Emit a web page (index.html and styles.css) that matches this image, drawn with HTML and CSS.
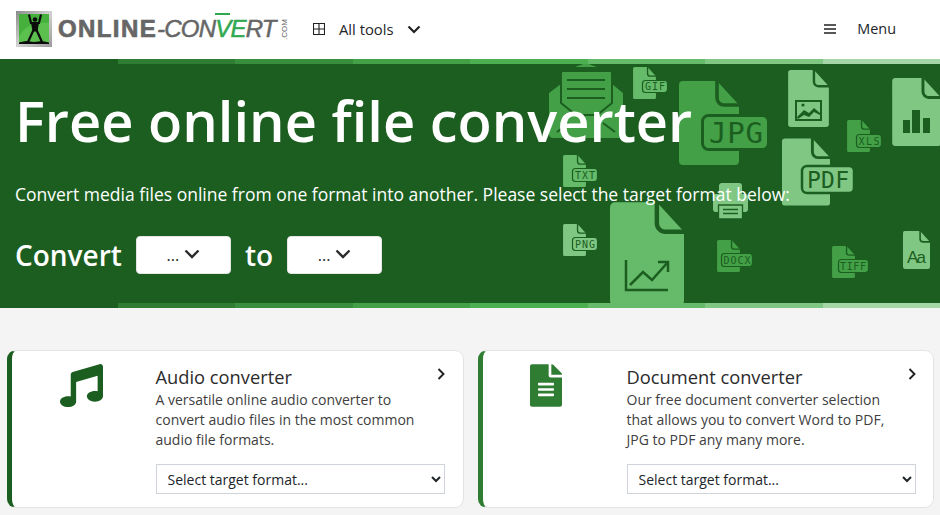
FILE: index.html
```html
<!DOCTYPE html>
<html lang="en">
<head>
<meta charset="utf-8">
<title>Online-Convert</title>
<link rel="stylesheet" href="styles.css">
</head>
<body>
<svg class="defs" width="0" height="0" aria-hidden="true">
  <defs>
    <symbol id="doc" viewBox="0 0 60 84">
      <path fill="currentColor" d="M4 0H38L60 24V80a4 4 0 0 1-4 4H4a4 4 0 0 1-4-4V4a4 4 0 0 1 4-4z"/>
      <path fill="none" stroke="#1b5e20" stroke-width="3.6" d="M38-2V17a7 7 0 0 0 7 7H62"/>
    </symbol>
  </defs>
</svg>
<header class="topbar">
  <a class="logo" href="#">
    <svg class="logo-mark" viewBox="0 0 36 36">
      <defs>
        <linearGradient id="frame" x1="0" y1="0" x2="1" y2="1"><stop offset="0" stop-color="#8a8a8a"/><stop offset=".5" stop-color="#d2d2d2"/><stop offset="1" stop-color="#9a9a9a"/></linearGradient>
      </defs>
      <rect width="36" height="36" fill="url(#frame)"/>
      <rect x="3" y="3" width="30" height="30" fill="#45b03c"/>
      <path d="M3 26C8 15 20 10 33 12V33H3z" fill="#5cc04f"/>
      <path fill="none" stroke="#0c0c0c" stroke-width="2.200" d="M13 3.500 15 12H23L25 3.500M17.500 19 12 31M20.500 19 26 31"/>
      <path fill="#0c0c0c" d="M15 11.500h8l-1.500 9h-5z"/>
      <circle cx="19" cy="8.500" r="2.300" fill="#0c0c0c"/>
      <path fill="#0c0c0c" d="M3 33V31.500L10 30l8 1 8-1 7 1.500V33z"/>
    </svg>
    <span class="wordmark"><span class="wm-bold">ONLINE</span><span class="wm-it">-CON<span class="wm-v">V</span><span class="wm-g">E</span>RT</span></span>
    <span class="wm-com">.COM</span>
  </a>
  <button class="nav-btn tools" type="button">
    <svg class="ico-grid" viewBox="0 0 12 12"><path fill="none" stroke="#222" stroke-width="1.100" d="M.5.5h11v11H.5zM6 .5v11M.5 6h11"/></svg>
    <span>All tools</span>
    <svg class="ico-chev" viewBox="0 0 14 9"><path fill="none" stroke="#222" stroke-width="2.200" d="M1.500 1.500 7 7l5.500-5.500"/></svg>
  </button>
  <button class="nav-btn menu" type="button">
    <svg class="ico-burger" viewBox="0 0 12 10"><path fill="none" stroke="#222" stroke-width="1.600" d="M0 1h12M0 5h12M0 9h12"/></svg>
    <span>Menu</span>
  </button>
</header>

<section class="hero">
  <div class="strip strip-dark"><i></i><i></i><i></i><i></i><i></i><i></i><i></i><i></i></div>
  <svg class="hero-art" viewBox="0 0 940 249" aria-hidden="true">
    <g class="c43">
      <path fill="currentColor" d="M575 8 586 4 597 8z"/>
      <path fill="currentColor" d="M549 34 561 25H612L623 34V75a4 4 0 0 1-4 4H553a4 4 0 0 1-4-4z"/>
      <path fill="currentColor" stroke="#1b5e20" stroke-width="2" d="M563 12H610a2 2 0 0 1 2 2V44L597 56H576L561 44V14a2 2 0 0 1 2-2z"/>
      <path stroke="#1b5e20" stroke-width="2" d="M567 21h38M567 30h38M567 39h38M557 73l12-9M615 73 603 64"/>
      <use href="#doc" x="679" y="22" width="60" height="84"/>
      <use href="#doc" x="847" y="61" width="23" height="32"/>
      <use href="#doc" x="717" y="181" width="23" height="32"/>
      <use href="#doc" x="832" y="187" width="23" height="32"/>
    </g>
    <g class="c66">
      <use href="#doc" x="633" y="8" width="23" height="32"/>
      <use href="#doc" x="563" y="96" width="23" height="32"/>
      <use href="#doc" x="610" y="143" width="74" height="104"/>
    </g>
    <g class="c81">
      <use href="#doc" x="788" y="11" width="41" height="57"/>
      <use href="#doc" x="892" y="19" width="49" height="68"/>
      <use href="#doc" x="782" y="79" width="48" height="68"/>
      <use href="#doc" x="563" y="165" width="23" height="32"/>
      <use href="#doc" x="903" y="172" width="27" height="38"/>
      <path fill="currentColor" d="M722 124h17a3 3 0 0 1 3 3v8h3a3 3 0 0 1 3 3v12a3 3 0 0 1-3 3h-3v6h-23v-6h-3a3 3 0 0 1-3-3v-12a3 3 0 0 1 3-3h3v-8a3 3 0 0 1 3-3z"/>
      <path stroke="#1b5e20" stroke-width="1.300" fill="currentColor" d="M718.500 146h24v14h-24z"/>
      <path stroke="#1b5e20" stroke-width="1.300" fill="none" d="M723 150.500h15M723 154.500h15"/>
    </g>
    <g class="art-lines" fill="none" stroke="#1b5e20">
      <path stroke-width="2" d="M796 42h25v19h-25z"/>
      <path fill="#1b5e20" stroke="none" d="M797 58l7-7 5 3 5-5 6 5v2l-6-3-5 5-5-2-6 4z"/>
      <circle cx="803" cy="46" r="1.600" fill="#1b5e20" stroke="none"/>
      <path fill="#1b5e20" stroke="none" d="M903 61h7v13h-7zM912 51h8v23h-8zM923 59h7v15h-7z"/>
      <path stroke-width="2.500" d="M626 201v31M625 231h43M630 226l13-13 9 8 16-18M658 203h10v10"/>
    </g>
    <g class="labels">
      <g class="c66"><rect x="642.500" y="21.500" width="25" height="12" rx="3"/><text x="655" y="31" textLength="20">GIF</text></g>
      <g class="c66"><rect x="572.500" y="109.500" width="25" height="13" rx="3"/><text x="585" y="120" textLength="20">TXT</text></g>
      <g class="c81"><rect x="572.500" y="178.500" width="25" height="13" rx="3"/><text x="585" y="189" textLength="20">PNG</text></g>
      <g class="c43"><rect x="856.500" y="75.500" width="25" height="13" rx="3"/><text x="869" y="86" textLength="21">XLS</text></g>
      <g class="c43"><rect x="721.500" y="194.500" width="31" height="13" rx="3"/><text x="737" y="205" textLength="27">DOCX</text></g>
      <g class="c43"><rect x="838.500" y="200.500" width="30" height="13" rx="3"/><text x="853" y="211" textLength="26">TIFF</text></g>
      <g class="c43 big"><rect x="702.500" y="56.500" width="66" height="34" rx="6"/><text x="736" y="84" textLength="54">JPG</text></g>
      <g class="c81 mid"><rect x="802" y="107" width="52" height="27" rx="5"/><text x="828" y="129" textLength="42">PDF</text></g>
      <g class="c81"><text class="aa" x="916.500" y="204" textLength="19">Aa</text></g>
    </g>
  </svg>
  <div class="hero-body">
    <h1 class="hero-title">Free online file converter</h1>
    <p class="hero-sub">Convert media files online from one format into another. Please select the target format below:</p>
    <div class="convert-row">
      <span class="convert-word">Convert</span>
      <button class="fmt-btn" type="button"><span>...</span><svg viewBox="0 0 16 10"><path fill="none" stroke="#2b2b2b" stroke-width="2.400" d="M1.500 1.500 8 8l6.500-6.500"/></svg></button>
      <span class="convert-word">to</span>
      <button class="fmt-btn" type="button"><span>...</span><svg viewBox="0 0 16 10"><path fill="none" stroke="#2b2b2b" stroke-width="2.400" d="M1.500 1.500 8 8l6.500-6.500"/></svg></button>
    </div>
  </div>
  <div class="strip strip-light"><i></i><i></i><i></i><i></i><i></i><i></i><i></i><i></i></div>
</section>

<main class="cards">
  <article class="card card-audio">
    <div class="card-icon">
      <svg class="ico-music" viewBox="0 0 512 512"><path fill="#1b5e20" d="M511.990 32.010c0-21.710-21.100-37.010-41.600-30.510L150.400 96c-13.300 4.200-22.400 16.500-22.400 30.500v261.420c-10.050-2.380-20.720-3.920-32-3.920-53.020 0-96 28.650-96 64s42.980 64 96 64 96-28.650 96-64V214.310l256-75.020v184.630c-10.050-2.380-20.720-3.920-32-3.920-53.020 0-96 28.650-96 64s42.980 64 96 64 96-28.650 96-64l-.01-351.990z"/></svg>
    </div>
    <div class="card-body">
      <svg class="ico-next" viewBox="0 0 8 12"><path fill="none" stroke="#222" stroke-width="1.900" d="M1.500 1 6.500 6l-5 5"/></svg>
      <h2 class="card-title">Audio converter</h2>
      <p class="card-text">A versatile online audio converter to convert audio files in the most common audio file formats.</p>
      <select class="card-select"><option>Select target format...</option></select>
    </div>
  </article>
  <article class="card card-doc">
    <div class="card-icon">
      <svg class="ico-file" viewBox="0 0 384 512"><path fill="#2e7d32" d="M224 136V0H24C10.700 0 0 10.700 0 24v464c0 13.300 10.700 24 24 24h336c13.300 0 24-10.700 24-24V160H248c-13.200 0-24-10.800-24-24zm64 236c0 6.600-5.400 12-12 12H108c-6.600 0-12-5.400-12-12v-8c0-6.600 5.400-12 12-12h168c6.600 0 12 5.400 12 12v8zm0-64c0 6.600-5.400 12-12 12H108c-6.600 0-12-5.400-12-12v-8c0-6.600 5.400-12 12-12h168c6.600 0 12 5.400 12 12v8zm0-72v8c0 6.600-5.400 12-12 12H108c-6.600 0-12-5.400-12-12v-8c0-6.600 5.400-12 12-12h168c6.600 0 12 5.400 12 12zm96-114.100v6.100H256V0h6.100c6.400 0 12.500 2.500 17 7l97.900 98c4.500 4.500 7 10.600 7 16.900z"/></svg>
    </div>
    <div class="card-body">
      <svg class="ico-next" viewBox="0 0 8 12"><path fill="none" stroke="#222" stroke-width="1.900" d="M1.500 1 6.500 6l-5 5"/></svg>
      <h2 class="card-title">Document converter</h2>
      <p class="card-text">Our free document converter selection that allows you to convert Word to PDF, JPG to PDF any many more.</p>
      <select class="card-select"><option>Select target format...</option></select>
    </div>
  </article>
</main>
</body>
</html>
```

FILE: styles.css
```css
* { box-sizing: border-box; }
html, body { margin: 0; padding: 0; }
body { background: #f4f4f4; color: #212529; font-family: "Open Sans", "Liberation Sans", sans-serif; overflow: hidden; }
.defs { position: absolute; }

.topbar { height: 59px; background: #fff; display: flex; align-items: center; padding: 0 0 1px 16px; }
.logo { display: flex; align-items: center; text-decoration: none; width: 297px; flex: none; height: 36px; }
.logo-mark { width: 36px; height: 36px; flex: none; display: block; }
.wordmark { margin-left: 6px; font-family: "Liberation Sans", sans-serif; font-size: 24px; line-height: 1; color: #666; white-space: nowrap; }
.wm-bold { font-weight: 700; letter-spacing: 1.400px; -webkit-text-stroke: .7px #666; }
.wm-it { font-style: italic; letter-spacing: -.8px; -webkit-text-stroke: .5px #666; }
.wm-v { color: #2fa84f; border-top: 2px solid #2fa84f; -webkit-text-stroke: .5px #2fa84f; }
.wm-g { color: #2fa84f; -webkit-text-stroke: .5px #2fa84f; }
.wm-com { font-size: 8px; color: #666; writing-mode: vertical-rl; transform: rotate(180deg); margin-left: 5px; line-height: 1; font-family: "Liberation Sans", sans-serif; }

.nav-btn { display: flex; align-items: center; background: none; border: 0; padding: 0; font: 400 14.400px/20px "Open Sans", sans-serif; color: #212529; }
.tools { font-size: 14.800px; }
.ico-grid { width: 12px; height: 12px; margin-right: 14px; }
.ico-chev { width: 14px; height: 9px; margin-left: 13px; }
.menu { margin-left: auto; margin-right: 44px; }
.ico-burger { width: 12px; height: 10px; margin-right: 21px; }

.hero { position: relative; height: 249px; background: #1b5e20; display: flex; flex-direction: column; justify-content: space-between; overflow: hidden; }
.strip { display: grid; grid-template-columns: repeat(8, 1fr); height: 5px; position: relative; z-index: 2; flex: none; }
.strip i:nth-child(1) { background: #1b5e20; }
.strip i:nth-child(2) { background: #2e7d32; }
.strip i:nth-child(3) { background: #388e3c; }
.strip i:nth-child(4) { background: #43a047; }
.strip i:nth-child(5) { background: #4caf50; }
.strip i:nth-child(6) { background: #66bb6a; }
.strip i:nth-child(7) { background: #81c784; }
.strip i:nth-child(8) { background: #a5d6a7; }
.hero-art { position: absolute; inset: 0; width: 940px; height: 249px; }
.c43 { color: #43a047; }
.c66 { color: #66bb6a; }
.c81 { color: #81c784; }
.labels rect { fill: currentColor; stroke: #1b5e20; stroke-width: 1.200; }
.labels text { fill: #1b5e20; font: 400 10px "DejaVu Sans Mono", "Liberation Mono", monospace; text-anchor: middle; }
.labels .big rect { stroke-width: 3; }
.labels .big text { font-size: 29px; }
.labels .mid rect { stroke-width: 2.500; }
.labels .mid text { font-size: 23px; }
.labels .aa { font: 400 17px "Liberation Sans", sans-serif; }

.hero-body { position: relative; z-index: 1; padding: 0 15px; flex: 1; color: #fff; }
.hero-title { margin: 20px 0 0; font-size: 56px; line-height: 72px; font-weight: 600; white-space: nowrap; }
.hero-sub { margin: 25px 0 0; font-size: 17.500px; line-height: 27px; white-space: nowrap; }
.convert-row { display: flex; align-items: center; gap: 14px; margin: 28px 0 0; }
.convert-word { font-size: 28px; line-height: 38px; font-weight: 600; }
.fmt-btn { width: 95px; height: 38px; background: #fff; border: 1px solid #e6e6e6; border-radius: 4px; display: flex; align-items: center; justify-content: center; gap: 5px; font: 400 16px/20px "Open Sans", sans-serif; color: #212529; padding: 0; }
.fmt-btn svg { width: 16px; height: 10px; margin-top: -3px; }

.cards { display: grid; grid-template-columns: 457px 456px; gap: 14px; padding: 42px 0 0 7px; }
.card { height: 158px; background: #fff; border: 1px solid #e3e3e3; border-left: 5px solid #1b5e20; border-radius: 9px; display: grid; grid-template-columns: 143.500px 1fr; padding-right: 18px; }
.card-doc { border-left-color: #2e7d32; padding-right: 17px; }
.card-icon { display: flex; justify-content: center; padding: 13px 4px 0 0; }
.card-doc .card-icon { padding-right: 18px; }
.ico-music { width: 43px; height: 43px; }
.ico-file { width: 32px; height: 43px; }
.card-body { position: relative; padding-top: 13px; }
.ico-next { position: absolute; right: 0; top: 17px; width: 8px; height: 12px; }
.card-title { margin: 0; font-size: 18.300px; line-height: 26px; font-weight: 500; color: #2b2b2b; }
.card-text { margin: 0; padding-right: 20px; font-size: 14px; line-height: 20px; color: #404040; height: 60px; }
.card-select { display: block; width: 100%; height: 30px; margin-top: 14px; padding: 0 7px; background: #fff; border: 1px solid #ced4da; border-radius: 0; font: 400 14px "Open Sans", sans-serif; color: #212529; }
```
